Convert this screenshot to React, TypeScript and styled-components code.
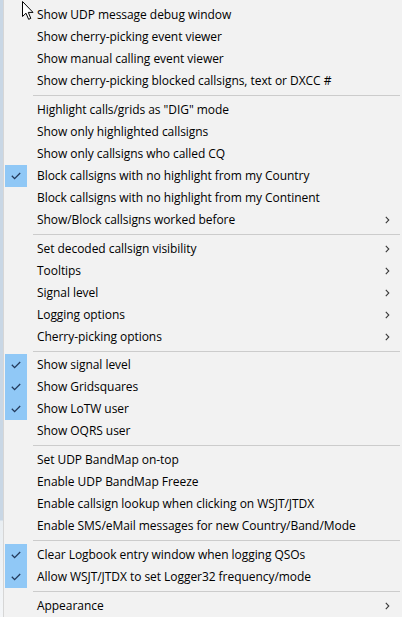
import React from "react";
import styled, { createGlobalStyle } from "styled-components";

const Global = createGlobalStyle`
  html, body { margin: 0; padding: 0; background: #f2f2f2; overflow: hidden; }
  #root { height: 617px; }
`;

const Page = styled.div`
  display: flex;
  height: 617px;
  width: 402px;
  overflow: hidden;
`;

const Strip = styled.div`
  width: 3px;
  flex: none;
  background: linear-gradient(#c9d7e5 0, #c9d7e5 520px, #e9eef2 521px, #f4f6f8 100%);
`;

const Menu = styled.div`
  position: relative;
  flex: 1;
  display: flex;
  flex-direction: column;
  padding-top: 4px;
  background: #f2f2f2;
  border-left: 1px solid #d6d6d6;
  font-family: "Open Sans", "Noto Sans", sans-serif;
  font-size: 12px;
  color: #000;
`;

const Row = styled.div`
  display: grid;
  grid-template-columns: 22px 1fr 20px;
  column-gap: 10px;
  align-items: center;
  height: 22px;
  line-height: 22px;
  padding-left: 1px;
  padding-right: 5px;
  white-space: nowrap;
`;

const Check = styled.div<{ $on?: boolean }>`
  height: 22px;
  display: flex;
  align-items: center;
  justify-content: center;
  background: ${(p) => (p.$on ? "#90c8f6" : "transparent")};
`;

const Label = styled.span`
  letter-spacing: -0.05px;
`;

const Arrow = styled.div`
  display: flex;
  align-items: center;
  justify-content: center;
`;

const Separator = styled.div`
  height: 7px;
  display: flex;
  align-items: center;
  margin-left: 29px;
  margin-right: 2px;
  &::after {
    content: "";
    flex: 1;
    height: 1px;
    background: #cccccc;
  }
`;

const Cursor = styled.svg`
  position: absolute;
  left: 18px;
  top: 1px;
`;

type Item = { t: string; c?: boolean; s?: boolean } | "sep";

const items: Item[] = [
  { t: "Show UDP message debug window" },
  { t: "Show cherry-picking event viewer" },
  { t: "Show manual calling event viewer" },
  { t: "Show cherry-picking blocked callsigns, text or DXCC #" },
  "sep",
  { t: 'Highlight calls/grids as "DIG" mode' },
  { t: "Show only highlighted callsigns" },
  { t: "Show only callsigns who called CQ" },
  { t: "Block callsigns with no highlight from my Country", c: true },
  { t: "Block callsigns with no highlight from my Continent" },
  { t: "Show/Block callsigns worked before", s: true },
  "sep",
  { t: "Set decoded callsign visibility", s: true },
  { t: "Tooltips", s: true },
  { t: "Signal level", s: true },
  { t: "Logging options", s: true },
  { t: "Cherry-picking options", s: true },
  "sep",
  { t: "Show signal level", c: true },
  { t: "Show Gridsquares", c: true },
  { t: "Show LoTW user", c: true },
  { t: "Show OQRS user" },
  "sep",
  { t: "Set UDP BandMap on-top" },
  { t: "Enable UDP BandMap Freeze" },
  { t: "Enable callsign lookup when clicking on WSJT/JTDX" },
  { t: "Enable SMS/eMail messages for new Country/Band/Mode" },
  "sep",
  { t: "Clear Logbook entry window when logging QSOs", c: true },
  { t: "Allow WSJT/JTDX to set Logger32 frequency/mode", c: true },
  "sep",
  { t: "Appearance", s: true },
];

const CheckMark = () => (
  <svg width="10" height="8" viewBox="0 0 10 8">
    <polyline points="0.8,3.8 3.6,6.6 9.2,1" fill="none" stroke="#22395a" strokeWidth="1.3" />
  </svg>
);

const Chevron = () => (
  <svg width="5" height="8" viewBox="0 0 5 8">
    <polyline points="0.8,0.8 3.8,4 0.8,7.2" fill="none" stroke="#3a3a3a" strokeWidth="1.1" />
  </svg>
);

export default function App() {
  return (
    <>
      <Global />
      <Page>
        <Strip />
        <Menu>
          {items.map((it, i) =>
            it === "sep" ? (
              <Separator key={i} />
            ) : (
              <Row key={i}>
                <Check $on={it.c}>{it.c && <CheckMark />}</Check>
                <Label>{it.t}</Label>
                <Arrow>{it.s && <Chevron />}</Arrow>
              </Row>
            )
          )}
          <Cursor width="13" height="20" viewBox="0 0 13 20">
            <polygon
              points="0.5,0.5 0.5,15.5 4,12.2 6.6,18.3 8.8,17.4 6.3,11.4 11,11.4"
              fill="#fff"
              stroke="#000"
              strokeWidth="1"
              strokeLinejoin="miter"
            />
          </Cursor>
        </Menu>
      </Page>
    </>
  );
}
